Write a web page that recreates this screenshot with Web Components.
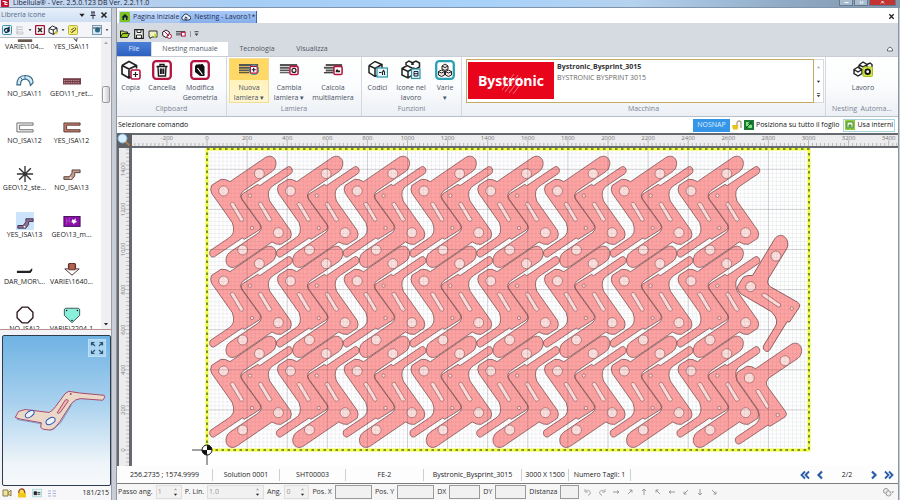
<!DOCTYPE html>
<html lang="it">
<head>
<meta charset="utf-8">
<title>Libellula</title>
<style>
html,body{height:100%;margin:0}
body{font:7px/10px "Open Sans","Noto Sans",sans-serif;color:#222;background:#fff;overflow:hidden}
</style>
</head>
<body>
<nest-app></nest-app>
<script>
const ICONS = {
  logo:['0 0 10 10','<rect width="10" height="10" rx="1" fill="#c8102e"/><path d="M2 3h3v4h3M5 3l3 2" stroke="#fff" fill="none" stroke-width="1.3"/>'],
  home:['0 0 10 10','<rect width="10" height="10" rx="1" fill="#7fc41c"/><path d="M1.5 5.200 5 2l3.500 3.200h-1V8h-5V5.200z" fill="#123"/><rect x="4.300" y="5.500" width="1.500" height="2.500" fill="#bde36a"/>'],
  cloud:['0 0 12 10','<path d="M3 8.500a2.300 2.300 0 0 1-.3-4.500A3.300 3.300 0 0 1 9 3.500a2.500 2.500 0 0 1 .3 5zM6 9.500V5M4 6.700 6 4.700l2 2" fill="#eef5ff" stroke="#1c2a44" stroke-width="1.100"/>'],
  open:['0 0 10 10','<path d="M0.500 8.500V2h3l1 1h3v1.500" fill="#cde04a" stroke="#1a1a1a"/><path d="M.5 8.500 2.500 4.500h7L7.500 8.500z" fill="#9acb22" stroke="#1a1a1a" stroke-width=".9"/>'],
  save:['0 0 10 10','<path d="M.7.7h8.600v8.600H.7z" fill="#fff" stroke="#222" stroke-width="1.200"/><path d="M3 1v2.500h4V1M2.500 9V6h5v3" fill="none" stroke="#222"/>'],
  refresh:['0 0 10 10','<path d="M1 2h8v6H4L2 9.500V8H1z" fill="#eef3c0" stroke="#222" stroke-width=".9"/><path d="M6.500 4.500 9.500 6 6 9.500z" fill="#c4d63a"/>'],
  cubeplus:['0 0 10 10','<path d="M.7 3 4 1l3.300 2v3.500L4 8.500.7 6.500z" fill="#fff" stroke="#222"/><circle cx="7.300" cy="7.200" r="2.200" fill="#fff" stroke="#b4133f"/><path d="M2 2l5 5" stroke="#b4133f"/>'],
  sheetred:['0 0 12 10','<path d="M0 2h11M0 4h7M0 6h7" stroke="#444" stroke-width="1.100"/><rect x="6.500" y="3" width="4.500" height="4.500" fill="#fff" stroke="#b4133f" stroke-width="1.200"/>'],
  copy:['0 0 20 20','<path d="M1 5.500 8 1.500l7.500 4v3M1 5.500v8.500l7 4 2-1M1 5.500l7 3.500 7.500-3.500M8 9v9" fill="none" stroke="#222" stroke-width="1.700"/><rect x="10" y="10" width="9" height="9" rx="1.500" fill="#fff" stroke="#b4133f" stroke-width="1.600"/><path d="M14.500 12v5M12 14.500h5" stroke="#222" stroke-width="1.200"/>'],
  trash:['0 0 20 20','<rect x="1.200" y="1.200" width="17.600" height="17.600" rx="3" fill="#fff" stroke="#b4133f" stroke-width="2.300"/><path d="M4.500 6.500h11M8 6V4.500h4V6M6 7l.5 9h7L14 7M8.500 8.500V14M10 8.500V14M11.700 8.500V14" fill="none" stroke="#1a1a1a" stroke-width="1.400"/>'],
  modify:['0 0 20 20','<rect x="1.200" y="1.200" width="17.600" height="17.600" rx="3" fill="#fff" stroke="#b4133f" stroke-width="2.300"/><path d="M5 6l2-2 1 1 1-1.200 1.500 1.200V4h2l2 2.500V16h-4.500L5 12z" fill="#111"/><path d="M7.500 8 12.500 14.500" stroke="#fff" stroke-width="1.200"/>'],
  newsheet:['0 0 22 20','<path d="M0 4.500h21M0 7.500h12M0 10.500h12" stroke="#555" stroke-width="2"/><path d="M0 13h11" stroke="#222" stroke-width="1"/><circle cx="16.500" cy="9.700" r="5.200" fill="#ffeeb0" stroke="#3a9fae" stroke-width="1.200"/><rect x="12.500" y="6" width="7.500" height="7.500" rx="1" fill="#fff" stroke="#b4133f" stroke-width="1.300"/><path d="M16.200 7.500v4.500M14 9.700h4.500" stroke="#123" stroke-width="1.300"/>'],
  chgsheet:['0 0 22 20','<path d="M1 4.500h19M1 7.500h10M1 10.500h10" stroke="#555" stroke-width="2"/><path d="M1 13h10" stroke="#222" stroke-width="1"/><rect x="12" y="6" width="9" height="9" rx="1.500" fill="#fff" stroke="#b4133f" stroke-width="1.700"/><circle cx="16.500" cy="10.500" r="2.200" fill="none" stroke="#222" stroke-width="1.400"/>'],
  multi:['0 0 22 20','<path d="M3 4.500h18M1 7.500h11M3 10.500h9" stroke="#555" stroke-width="2.300"/><path d="M1 13h10" stroke="#222" stroke-width="1.300"/><rect x="12" y="6" width="9" height="9" rx="1.500" fill="#fff" stroke="#b4133f" stroke-width="1.700"/><path d="M14 12.500v-2L15.500 9l1.500 1.500h1.800v2z" fill="#222"/>'],
  codes:['0 0 20 20','<path d="M1 5.500 7 1.500l7 3v4M1 5.500v7l6 4 2-1M1 5.500l6 3 7-4M7 8.500v8" fill="none" stroke="#222" stroke-width="1.500"/><rect x="9" y="8" width="10.500" height="9" fill="#e8f8fb" stroke="#2894a8" stroke-width="1.200"/><path d="M11 12.500h2.500M14.500 15v-3l1-1.500 1 1.500v3" stroke="#222" stroke-width="1.100" fill="none"/>'],
  icons:['0 0 20 20','<path d="M1 8.500 6 5.500l6 3v6L7 18l-6-3zM1 8.500l6 3 5-3M7 11.500V18M5 5V3l3-2 3 1.500V5M12 5V2.500L15 1l3.500 2v4L15 9l-3-1" fill="none" stroke="#222" stroke-width="1.500"/><rect x="10.500" y="9" width="8.500" height="9.500" fill="#dff3f7" stroke="#2894a8" stroke-width="1.200"/><path d="M13 11.500h4v4.500h-4zM13 13.700h4" fill="none" stroke="#223"/>'],
  misc:['0 0 20 20','<rect x="1.200" y="1.200" width="17.600" height="17.600" rx="3" fill="#fff" stroke="#2aa0b4" stroke-width="2.300"/><path d="M7 6l3-2 3 2v3l-3 1.500L7 9zM3.500 11.500 6.500 10l3 1.500V15l-3 1.500-3-1.500zM10.500 11.500l3-1.500 3 1.500V15l-3 1.500-3-1.500zM7 6l3 1.500L13 6M3.500 11.500l3 1.500 3-1.500 1 0 3 1.500 3-1.500" fill="#f3dede" stroke="#222" stroke-width="1"/>'],
  job:['0 0 20 20','<path d="M6 5l4-3 4 2.500V8M6 5v3l2.500 1.500M1 9.500l4-2.500 4 2.500v4L5 16l-4-2.500zM14 4.500l3-1.500 2 1.500V7M1 9.500 5 12l4-2.500M6 5l4 2 4-2" fill="none" stroke="#222" stroke-width="1.400"/><rect x="10" y="7" width="9.500" height="9.500" rx="1" fill="#d5e64b" stroke="#a3bf1e"/><circle cx="14.700" cy="11.700" r="2.300" fill="#fff" stroke="#111" stroke-width="1.800"/>'],
  lock:['0 0 10 10','<path d="M5 5V3a2 2 0 0 1 4 0v5" fill="none" stroke="#a98" stroke-width="1.300"/><path d="M0 5h6.500l-1 4.500H1z" fill="#e8c216"/>'],
  full:['0 0 10 10','<rect width="10" height="10" fill="#1c7a35"/><path d="M2 2h3l-1 2 4 1v3H5L2 6z" fill="#7fe07c"/><path d="M2 8l6-6" stroke="#052"/>'],
  inner:['0 0 10 10','<rect width="10" height="10" fill="#8fcb38"/><path d="M2 8V2h6v6H6V5H4v3z" fill="#f0f8c8" stroke="#274" stroke-width=".8"/>'],
  lib1:['0 0 10 10','<rect x=".5" y=".5" width="9" height="9" rx="1" fill="#dff1f8" stroke="#3d93b2"/><path d="M2.500 6.500C2 4 4 3 5.500 3.500L7 2.500v3L5 5M7.500 5C7 7 5 7.500 3 7" stroke="#123" fill="none" stroke-width="1.300"/>'],
  lib2:['0 0 10 10','<path d="M2 2h6M2 4.500h6M2 7h6v2H2zM2 1v8" stroke="#c3c3c8" fill="none"/>'],
  lib3:['0 0 10 10','<rect x=".6" y=".6" width="8.800" height="8.800" rx="1" fill="#fff" stroke="#a1112f" stroke-width="1.300"/><path d="M3 3l4 4M7 3 3 7" stroke="#222" stroke-width="1.500"/>'],
  lib4:['0 0 10 10','<path d="M1 3.500 4.500 1l4.500 2v4L5.500 9.500 1 7.500zM1 3.500 5 5l4-2M5.300 5v4" fill="#fff" stroke="#222"/><circle cx="8" cy="7.500" r="1.500" fill="#c9c33b"/>'],
  lib5:['0 0 10 10','<rect x=".5" y=".5" width="9" height="9" rx="1" fill="#f3f07a" stroke="#b9b63a"/><path d="M3 5l3-2M4 7l3-2M2.500 6.500a1.500 1.500 0 1 0 2-2M6 5.500a1.500 1.500 0 1 0 .5-3" stroke="#775a28" fill="none"/>'],
  lib6:['0 0 10 10','<rect x=".5" y=".5" width="9" height="9" fill="#d8e8f3" stroke="#7899b4"/><circle cx="5.500" cy="5" r="2.500" fill="#2b6a86"/><path d="M1 3h8" stroke="#444"/>'],
  b1:['0 0 10 10','<path d="M1 2h5v6H1zM6 5l3-3v6L6 6" fill="#efe3a0" stroke="#8b7b45"/>'],
  b2:['0 0 10 10','<path d="M1 5h8v4.500H1z" fill="#f0c81c"/><path d="M2 5C1 1 5 0 7 2l1 3" fill="#f7dd50" stroke="#8c3b16" stroke-width="1.200"/>'],
  b3:['0 0 12 10','<rect x=".5" y=".5" width="11" height="9" fill="#e6f5f4" stroke="#a9d8da"/><path d="M2.500 3.500h3v3.500h-3zM6.500 4.500h3.500M6.500 6.500h3.500" fill="#222" stroke="#222"/>'],
  b4:['0 0 10 10','<path d="M1 3h3M5.500 3H9M1 5.500h3M5.500 5.500H9M1 8h3M5.500 8H9" stroke="#a9b5d8" stroke-width="1.200"/>'],
  expand:['0 0 18 18','<rect width="18" height="18" fill="#a8d6f3" stroke="#c9e8fa"/><path d="M7 7 4 4M11 7l3-3M7 11l-3 3M11 11l3 3M3.500 6.500v-3h3M11.500 3.500h3v3M3.500 11.500v3h3M11.500 14.500h3v-3" stroke="#33536e" fill="none" stroke-width="1.200"/>'],
  zoom:['0 0 14 14','<rect width="14" height="14" fill="#5c5f66"/><path d="M8 8l4.500 4.500" stroke="#b5793e" stroke-width="2"/><circle cx="5.500" cy="5.500" r="4.500" fill="#d8eefc" stroke="#7fb4dc"/>'],
  pin:['0 0 8 8','<path d="M2 1h4M3 1v3M5 1v3M1.500 4.500h5M4 4.500V8" stroke="#334" fill="none"/>'],
  x:['0 0 8 8','<path d="M1.500 1.500l5 5M6.500 1.500l-5 5" stroke="#222" stroke-width="1.500"/>'],
  down:['0 0 6 6','<path d="M1 2h4L3 4.500z" fill="#222"/>'],
  up:['0 0 6 6','<path d="M1 4h4L3 1.500z" fill="#aaa"/>'],
  more:['0 0 6 6','<path d="M1 .7h4" stroke="#444"/><path d="M1 2.500h4L3 5z" fill="#444"/>'],
  pent:['0 0 8 8','<path d="M1.500 4 4 2l2.500 2v2h-5z" fill="#fff" stroke="#667"/>'],
  wmin:['0 0 8 5','<path d="M1 2.500h6" stroke="#fff" stroke-width="1.500"/>'],
  wmax:['0 0 8 5','<path d="M2 0v3.500h4V0" stroke="#fff" fill="none" stroke-width="1.200"/>'],
  wclose:['0 0 8 5','<path d="M1.500 4 4 1.500 6.500 4M4 1.500 2.500 0M4 1.500 5.500 0" stroke="#fff" fill="none" stroke-width="1.500"/>'],
  first:['0 0 10 10','<path d="M5 1.500 1.500 5 5 8.500M9 1.500 5.500 5 9 8.500" stroke="#2b5ca8" fill="none" stroke-width="1.800"/>'],
  prev:['0 0 10 10','<path d="M7 1.500 3.500 5 7 8.500" stroke="#2b5ca8" fill="none" stroke-width="2.200"/>'],
  next:['0 0 10 10','<path d="M3 1.500 6.500 5 3 8.500" stroke="#2b5ca8" fill="none" stroke-width="2.200"/>'],
  last:['0 0 10 10','<path d="M1 1.500 4.500 5 1 8.500M5 1.500 8.500 5 5 8.500" stroke="#2b5ca8" fill="none" stroke-width="1.800"/>'],
  undo:['0 0 8 8','<path d="M1 1v3h3M1.500 3.500C4 1 7.500 3 6 6L4 7.500" stroke="#aaa" fill="none"/>'],
  redo:['0 0 8 8','<path d="M7 1v3H4M6.500 3.500C4 1 .5 3 2 6l2 1.500" stroke="#aaa" fill="none"/>'],
  clip:['0 0 12 10','<circle cx="4" cy="4" r="2.500" fill="#eee" stroke="#999"/><circle cx="6.500" cy="6.500" r="2.500" fill="#eee" stroke="#999"/><path d="M9.500 4.500h2.500l-1.200 1.500z" fill="#777"/>'],
  i_plate:['0 0 20 20','<path d="M2 17h16v3H2z" fill="#6b5a52"/>'],
  i_hook:['0 0 20 20','<path d="M12 16l3 3 1-5" stroke="#555" fill="none" stroke-width="1.200"/>'],
  i_arc:['0 0 20 20','<path d="M1 15.500C1 8 4.500 5 10 5s9 3 9 8l-3 3C15.500 11.500 13 9 10 9s-5 2-5 6.500z" fill="#d5ecf8" stroke="#376a88" stroke-width="1.300"/><path d="M10 5v4M5 7l2.500 3" stroke="#376a88"/>'],
  i_grid:['0 0 20 20','<path d="M0 8h20v7H0z" fill="#743c48"/><path d="M1 10.500h18M1 13h18" stroke="#d9b4b4" stroke-dasharray="1 1"/>'],
  i_cw:['0 0 20 20','<path d="M19 5.500H1v10h18v-2.500H4V8h15z" fill="#f1f1f1" stroke="#666"/>'],
  i_cr:['0 0 20 20','<path d="M19 5.500H1v10h18v-2.500H4V8h15z" fill="#c77b6b" stroke="#4e3a36"/>'],
  i_star:['0 0 20 20','<path d="M10 1v18M1 10h18M3.500 3.500l13 13M16.500 3.500l-13 13" stroke="#333" stroke-width="1.500"/><circle cx="10" cy="10" r="2" fill="#333"/>'],
  i_z:['0 0 20 20','<path d="M1 16v-3h6l3-4V5.500h9V8.500h-6V12l-3 4z" fill="#c69a88" stroke="#4a3a38"/><circle cx="8.500" cy="14.500" r="1" fill="#fff"/>'],
  i_zs:['0 0 20 20','<rect width="20" height="20" fill="#cbe4fb"/><path d="M2 18v-3h6l3-4V7.500h8V10.500h-5V14l-3 4z" fill="#8f7190" stroke="#3a2d4c"/><circle cx="9.500" cy="16.500" r="1" fill="#fff"/>'],
  i_m:['0 0 20 20','<rect x="1" y="5" width="18" height="11" fill="#8a10a8" stroke="#3f0a55"/><path d="M10 8l2 1 2-2v3l2 1-3 1-1 2-1-2-2-1 1-1z" fill="#fff"/><path d="M4 7v7M7 6v6M4 10h4" stroke="#c860d8" stroke-width=".6"/>'],
  i_bar:['0 0 20 20','<path d="M1 13h14l3-3v3l-2 2.500H1z" fill="#222"/>'],
  i_arrow:['0 0 20 20','<path d="M6 6h8v5h4l-8 7-8-7h4z" fill="#fff" stroke="#3a2420"/><path d="M6.500 5h7v7h-7z" fill="#b46250" stroke="#5b2a22"/>'],
  i_o:['0 0 20 20','<path d="M7 1.200h6L18.800 7v6L13 18.800H7L1.200 13V7z" fill="#fff" stroke="#2d1720" stroke-width="1.500" stroke-linejoin="round"/>'],
  i_sh:['0 0 20 20','<path d="M1.500 3.500 3 2.500h14l1.500 1v7L10 18.500 1.500 10.500z" fill="#8af0dc" stroke="#35494a"/><circle cx="4" cy="5" r=".8"/><circle cx="16" cy="5" r=".8"/><circle cx="10" cy="16" r=".8"/>']
};
const ARROWS={ne:'M2 6 6 2M3.500 2H6v2.500',n:'M4 7V1M2 3l2-2 2 2',nw:'M6 6 2 2M2 4.500V2h2.500',w:'M7 4H1M3 2.500 1 4l2 1.500',sw:'M6 2 2 6M2 3.500V6h2.500',s:'M4 1v6M2 5l2 2 2-2',se:'M2 2l4 4M6 3.500V6H3.500',e:'M1 4h6M5 2.500 7 4 5 5.500'};
for(const k in ARROWS) ICONS['ar_'+k]=['0 0 8 8',`<path d="${ARROWS[k]}" stroke="#999" fill="none"/>`];

/* Builds an element class from a template string. */
function define(name, css, html, setup){
  const t=document.createElement('template');
  t.innerHTML=`<style>*{box-sizing:border-box}button{font:inherit;color:inherit;background:none;border:0;padding:0;margin:0}${css}</style>${html}`;
  customElements.define(name, class extends HTMLElement{
    constructor(){super();this.attachShadow({mode:'open'}).append(t.content.cloneNode(true));}
    connectedCallback(){ if(!this.ready){this.ready=true; if(setup) setup(this,this.shadowRoot);} }
  });
}
function fillIcon(el,r){const n=document.createElement('ui-icon');n.setAttribute('name',el.getAttribute('icon'));r.querySelector('.i').append(n);}

define('ui-icon',':host{display:block;flex:none;width:var(--s,10px);height:var(--s,10px)}svg{display:block;width:100%;height:100%}','',(el,r)=>{
  const[v,b]=ICONS[el.getAttribute('name')];
  r.innerHTML+=`<svg viewBox="${v}" aria-hidden="true">${b}</svg>`;
});

define('title-bar',`
:host{display:flex;height:8px;align-items:flex-end;overflow:hidden;background:linear-gradient(90deg,#c9dcf2 0,#b4cfee 17%,#a5cdf6 28%,#a9d2fa 55%,#b5d2ee 70%,#8fa9c4 88%,#8496aa 100%);color:#223;border-bottom:1px solid #7f93ab}
.t{display:flex;gap:4px;padding:0 0 0 1px;align-items:center;line-height:8px;--s:8px}
.w{display:flex;margin-left:auto;padding-right:4px;gap:1px;height:6px;align-self:flex-start}
.w button{display:flex;justify-content:center;width:14px;height:6px;background:#a9bccf;border:solid #667a90;border-width:0 1px 1px;--s:5px}
.w .c{width:27px;background:#c23431}`,
`<div class="t"><ui-icon name="logo"></ui-icon><span>Libellula® - Ver. 2.5.0.123 DB Ver. 2.2.11.0</span></div>
<div class="w"><button aria-label="Riduci"><ui-icon name="wmin"></ui-icon></button><button aria-label="Ingrandisci"><ui-icon name="wmax"></ui-icon></button><button class="c" aria-label="Chiudi"><ui-icon name="wclose"></ui-icon></button></div>`);

define('lib-item',':host{display:flex;flex-direction:column;align-items:center;height:47px;padding-top:18px;--s:18px;white-space:nowrap;min-width:0}span{line-height:10px}',
`<div class="i"></div><span><slot></slot></span>`,fillIcon);

define('lib-panel',`
:host{display:flex;flex-direction:column;min-height:0;background:#f2f3f6;border-right:1px solid #9aa0aa}
.h{display:flex;align-items:center;height:14px;padding:0 3px 0 1px;background:linear-gradient(#e6effa,#cfdff1);color:#566a88;gap:3px;--s:8px}
.h span{margin-right:auto}
.tb{display:flex;align-items:center;height:16px;gap:3px;padding:0 2px;background:#f4f5f8;border-bottom:1px solid #b8bcc4;--s:10px}
.tb .d{--s:4px}.tb .push{margin-left:auto}
.body{flex:1;display:flex;min-height:0;background:#fff;border-bottom:1px solid #b98f8f}
.list{flex:1;overflow:hidden;display:grid;grid-template-columns:47px 47px;grid-auto-rows:47px;padding:0 1px;min-width:0}
.sb{width:10px;background:#f0f0f2;display:flex;flex-direction:column;align-items:center;justify-content:space-between;--s:6px;padding:2px 0}
.th{width:8px;height:17px;border:1px solid #9a9a9a;border-radius:2px;background:linear-gradient(90deg,#fff,#ccc);margin:40px 0 auto}
.pv{flex:none;height:151px;margin:5px 0 0 2px;border:1px solid #2c3c4c;border-radius:2px;background:linear-gradient(#6fb3e3,#a9d1ee 45%,#eef4f9 85%,#f7f9fb);position:relative}
.pv svg{display:block;width:100%;height:100%}
.pv button{position:absolute;top:3px;right:4px;--s:18px}
.ft{display:flex;align-items:center;height:14px;gap:5px;padding:0 2px;background:#f7f7f9}
.ft b{font-weight:400;margin-left:auto}`,
`<div class="h"><span>Libreria icone</span><ui-icon name="down"></ui-icon><ui-icon name="pin"></ui-icon><ui-icon name="x"></ui-icon></div>
<div class="tb"><button aria-label="Aggiorna"><ui-icon name="lib1"></ui-icon></button><button aria-label="Elenco"><ui-icon name="lib2"></ui-icon></button><ui-icon class="d" name="down"></ui-icon><button aria-label="Elimina"><ui-icon name="lib3"></ui-icon></button><button aria-label="Pezzo"><ui-icon name="lib4"></ui-icon></button><ui-icon class="d" name="down"></ui-icon><button aria-label="Collega"><ui-icon name="lib5"></ui-icon></button><button class="push" aria-label="Vista"><ui-icon name="lib6"></ui-icon></button><ui-icon class="d" name="down"></ui-icon></div>
<div class="body"><div class="list">
<lib-item icon="i_plate">VARIE\\104...</lib-item><lib-item icon="i_hook">YES_ISA\\11</lib-item>
<lib-item icon="i_arc">NO_ISA\\11</lib-item><lib-item icon="i_grid">GEO\\11_ret...</lib-item>
<lib-item icon="i_cw">NO_ISA\\12</lib-item><lib-item icon="i_cr">YES_ISA\\12</lib-item>
<lib-item icon="i_star">GEO\\12_ste...</lib-item><lib-item icon="i_z">NO_ISA\\13</lib-item>
<lib-item icon="i_zs">YES_ISA\\13</lib-item><lib-item icon="i_m">GEO\\13_m...</lib-item>
<lib-item icon="i_bar">DAR_MOR\\...</lib-item><lib-item icon="i_arrow">VARIE\\1640...</lib-item>
<lib-item icon="i_o">NO_ISA\\2</lib-item><lib-item icon="i_sh">VARIE\\2204-1</lib-item></div>
<div class="sb"><ui-icon name="up"></ui-icon><div class="th"></div><ui-icon name="down"></ui-icon></div></div>
<div class="pv"><svg viewBox="8 16 324 450"><g stroke="#a8486c" stroke-width="3" fill="#ead9c8" stroke-linejoin="round"><path d="M45 262 55 244 75 238 148 247 Q160 240 168 228L196 190 207 183 240 188 314 195 316 201 310 210 243 205Q228 205 215 220L180 275 163 296 150 300 130 298 122 292 124 278 60 267z"/><path d="M172 248 196 210Q204 204 206 212L182 246Q176 252 172 248z" fill="#f2b8b4"/></g><g fill="#eaf4fb" stroke="#3a53b4" stroke-width="3"><ellipse cx="89" cy="252" rx="15" ry="8" transform="rotate(-35 89 252)"/><ellipse cx="152" cy="273" rx="15" ry="9" transform="rotate(-30 152 273)"/></g><path d="M50 268 124 281M152 302 182 279 216 223" stroke="#6d72a8" stroke-width="2" fill="none"/><circle cx="213" cy="191" r="3" fill="#a8486c"/></svg><button aria-label="Espandi"><ui-icon name="expand"></ui-icon></button></div>
<div class="ft"><ui-icon name="b1"></ui-icon><ui-icon name="b2"></ui-icon><ui-icon name="b3"></ui-icon><ui-icon name="b4"></ui-icon><b>181/215</b></div>`,
(el,r)=>{r.querySelector('.list').scrollTop=32;});

define('doc-tabs',`
:host{display:flex;height:15px;align-items:flex-end;background:#fff;padding:0 3px 0 2px;--s:10px}
a{display:flex;align-items:center;gap:3px;height:12px;padding:0 1px;color:#1c2f55;text-decoration:none;background:linear-gradient(#c5dafa,#a9c6f2)}
a+a{background:linear-gradient(#a9c8f8,#86aeea);border-right:1px solid #3f62a8}
button{margin:0 0 3px auto;--s:7px}`,
`<a href="#home"><ui-icon name="home"></ui-icon>Pagina Iniziale</a><a href="#job"><ui-icon name="cloud"></ui-icon>Nesting - Lavoro1*</a><button aria-label="Chiudi scheda"><ui-icon name="x"></ui-icon></button>`);

define('ribbon-button',`
:host{display:flex;width:var(--w,40px)}
button{flex:1;display:flex;flex-direction:column;align-items:center;text-align:center;padding-top:2px;color:#4a5263;--s:20px;min-width:0;white-space:pre-line}
:host([hot]) button{background:linear-gradient(#ffd862 0,#ffd968 49%,#fff2bd 50%,#fff6cf);box-shadow:inset 0 0 0 1px #f0dc94}
span{margin-top:3px;line-height:10px}`,
`<button><div class="i"></div><span><slot></slot></span></button>`,fillIcon);

define('ribbon-group',`
:host{display:flex;flex-direction:column;border-right:1px solid #d3d8e1}
.r{display:flex;flex:1;min-height:0;padding:1px var(--pr,0) 0 var(--pl,0)}
.l{height:12px;line-height:12px;text-align:center;color:#7c8494;white-space:pre}`,
`<div class="r"><slot></slot></div><div class="l"></div>`,(el,r)=>{r.querySelector('.l').textContent=el.getAttribute('label')});

define('machine-gallery',`
:host{flex:1;display:flex;padding-top:1px}
.m{flex:1;display:flex;gap:3px;border:1px solid #c8ab62;background:#fff;padding:1px}
.logo{width:86px;margin:1px 0 2px;background:#e8051c;display:flex;align-items:center;justify-content:center;position:relative}
.logo b{font:700 14px/16px "Open Sans",sans-serif;color:#fff}
.logo svg{position:absolute;left:32px;top:8px;width:26px;height:26px}
.t b,.t span{display:block;line-height:11px}.t b{color:#333}.t span{color:#666}
.s{width:10px;border:1px solid #d5d9e0;border-left:0;background:#fff;display:flex;flex-direction:column;align-items:center;justify-content:space-around;--s:5px}`,
`<div class="m"><div class="logo"><b>Bystronic</b><svg viewBox="0 0 26 26"><path d="M2 20 14 4M5 22 18 5M9 23 21 7M13 24l10-13" stroke="#fff" stroke-opacity=".55" stroke-width=".8"/></svg></div><div class="t"><b>Bystronic_Bysprint_3015</b><span>BYSTRONIC BYSPRINT 3015</span></div></div>
<div class="s"><button aria-label="Su"><ui-icon name="up"></ui-icon></button><button aria-label="Giù"><ui-icon name="down"></ui-icon></button><button aria-label="Altro"><ui-icon name="more"></ui-icon></button></div>`);

define('app-ribbon',`
:host{display:block}
.top{background:#d6dae1;display:flex;flex-direction:column;height:33px;justify-content:flex-end}
.q{display:flex;align-items:center;gap:4px;padding:0 3px;height:14px;margin-bottom:1px;--s:10px}
.q .d{--s:6px;border-left:1px solid #999;padding-left:2px;width:10px}
.tabs{display:flex;height:14px;line-height:14px;align-items:stretch;color:#4f5766}
.tabs button{padding:0;text-align:center}
.f{width:34px;background:linear-gradient(#4a7fd8,#2c60c0);color:#dfe9ff}
.a{width:76px;background:#fff;margin-left:1px}
.x{width:58px}.y{width:52px}
.tabs .e{margin-left:auto;padding-right:4px;--s:8px}
.g{display:flex;height:61px;background:linear-gradient(#fff,#fbfcfd 50%,#eceff4);border-bottom:1px solid #b9bfc9;border-top:1px solid #c8cdd6}
ribbon-group{padding-bottom:1px}
ribbon-group:last-child{flex:none;width:72px;border-right:0;--pl:17px}
.mid{flex:1;--pl:4px;--pr:1px}`,
`<div class="top"><div class="q"><ui-icon name="open"></ui-icon><ui-icon name="save"></ui-icon><ui-icon name="refresh"></ui-icon><ui-icon name="cubeplus"></ui-icon><ui-icon name="sheetred"></ui-icon><ui-icon class="d" name="more"></ui-icon></div>
<div class="tabs"><button class="f">File</button><button class="a">Nesting manuale</button><button class="x">Tecnologia</button><button class="y">Visualizza</button><button class="e" aria-label="Riduci barra"><ui-icon name="pent"></ui-icon></button></div></div>
<div class="g">
<ribbon-group label="Clipboard" style="--pr:6px"><ribbon-button icon="copy" style="--w:27px">Copia</ribbon-button><ribbon-button icon="trash" style="--w:36px">Cancella</ribbon-button><ribbon-button icon="modify">Modifica
Geometria</ribbon-button></ribbon-group>
<ribbon-group label="Lamiera" style="--pl:2px;--pr:4px"><ribbon-button hot icon="newsheet">Nuova
lamiera ▾</ribbon-button><ribbon-button icon="chgsheet">Cambia
lamiera ▾</ribbon-button><ribbon-button icon="multi" style="--w:48px">Calcola
multilamiera</ribbon-button></ribbon-group>
<ribbon-group label="Funzioni"><ribbon-button icon="codes" style="--w:31px">Codici</ribbon-button><ribbon-button icon="icons" style="--w:36px">Icone nel
lavoro</ribbon-button><ribbon-button icon="misc" style="--w:32px">Varie
▾</ribbon-button></ribbon-group>
<ribbon-group class="mid" label="Macchina"><machine-gallery></machine-gallery></ribbon-group>
<ribbon-group label="Nesting  Automa..."><ribbon-button icon="job">Lavoro</ribbon-button></ribbon-group></div>`);

define('command-row',`
:host{display:flex;align-items:center;height:16px;padding:0 3px 0 1px;background:#fff;gap:2px;color:#111;--s:10px}
span{margin-right:auto}
button{display:flex;align-items:center;gap:2px;height:13px}
.n{background:#3596e8;color:#dff0ff;padding:0 3px;width:37px;justify-content:center}
.u{margin-left:2px;border:1px solid #a9d3da;padding:0 1px}`,
`<span>Selezionare comando</span><button class="n">NOSNAP</button><button aria-label="Blocco"><ui-icon name="lock"></ui-icon></button><button><ui-icon name="full"></ui-icon>Posiziona su tutto il foglio</button><button class="u"><ui-icon name="inner"></ui-icon>Usa interni</button>`);

define('nest-canvas',`
:host{display:grid;grid-template:15px 1fr / 15px 1fr;min-height:0;background:#fff}
svg{display:block;width:100%;height:100%;overflow:hidden}
.c{background:#5c5f66;--s:14px}
.h,.v{background:#ececee;overflow:hidden;min-height:0;min-width:0}
.h{border-top:2px solid #66696f;border-bottom:2px solid #66696f}
.v{border-left:2px solid #66696f;border-right:3px solid #66696f}
.m{overflow:hidden;min-height:0;min-width:0}
text{font:6px "Open Sans",sans-serif;fill:#777;text-anchor:middle}`,
`<div class="c"><ui-icon name="zoom"></ui-icon></div><div class="h"><svg></svg></div><div class="v"><svg></svg></div><div class="m"><svg></svg></div>`,
(el,r)=>{
  const S=40.1, X=75, Y=302, [h,v,m]=r.querySelectorAll('div svg');
  let a='',d='';
  for(let k=-1;k<=17;k++){const x=X+k*S; a+=`<text x="${x}" y="5">${k*200}</text>`;}
  for(let k=-2;k<=30;k++){const x=X+k*S; for(let j=0;j<10;j++)d+=`M${x+j*S/10} 11v${j?-3:-6}`;}
  h.innerHTML=`<path d="${d}" stroke="#999" stroke-width=".6"/>`+a;
  a='';d='';
  for(let k=-1;k<=7;k++){const y=Y-k*S; if(k>=0)a+=`<text transform="translate(6 ${y}) rotate(-90)">${k*200}</text>`; for(let j=0;j<10;j++)d+=`M10 ${y-j*S/10}h${j?-3:-5}`;}
  v.innerHTML=`<path d="${d}" stroke="#999" stroke-width=".6"/>`+a;
  const W=602,H=301,T=Y-H;
  let mi='',ma='';
  for(let i=0;i<=150;i++){const s=`M${X+i*S/10} ${T}v${H}`; i%10?mi+=s:ma+=s;}
  for(let i=0;i<=75;i++){const s=`M${X} ${Y-i*S/10}h${W}`; i%10?mi+=s:ma+=s;}
  let p='';
  for(let j=0;j<3;j++)for(let i=0;i<8;i++){p+=`<g transform="translate(${i*200.3} ${j*270})"><use href="#p"/><use href="#p" transform="rotate(180 408 245.500)"/></g>`;}
  p+='<use href="#p" transform="translate(1577 561)"/><use href="#p" transform="translate(1907 470) rotate(-24.500) translate(-326 -183)"/>';
  m.innerHTML=`<defs><g id="p"><path d="M345 155 446 86C468 68 488 86 482 108Q480 118 472 124L386 182Q372 194 380 208L435 284Q441 293 433 300L388 328 382 324 300 379C288 388 278 368 288 360L340 325Q364 312 352 278L290 190Q284 178 290 166L318 148Q332 146 345 155z" fill="#ffa3a2" stroke="#6a3a3a" stroke-width="2" stroke-linejoin="round"/><g fill="#fde0dd" stroke="#a05c5c" stroke-width="2"><circle cx="433" cy="131" r="15"/><circle cx="326" cy="183" r="15"/><circle cx="411" cy="294" r="5"/><path d="M345 222Q352 212 359 222L386 268Q384 278 376 273z"/></g></g></defs>
  <rect x="${X}" y="${T}" width="${W}" height="${H}" fill="#fff"/>
  <g transform="translate(-17 -18) scale(.33333)">${p}</g>
  <path d="${mi}" stroke="#4a5070" stroke-opacity=".14" stroke-width=".5"/><path d="${ma}" stroke="#334" stroke-opacity=".32" stroke-width=".7"/>
  <rect x="${X}" y="${T}" width="${W}" height="${H}" fill="none" stroke="#f4fa3c" stroke-width="3"/>
  <rect x="${X}" y="${T}" width="${W}" height="${H}" fill="none" stroke="#4a7320" stroke-width="1.500" stroke-dasharray="2.500 3.500"/>
  <path d="M${X-15} ${Y}h16M${X} ${Y-2}v17" stroke="#444" stroke-width="1"/><circle cx="${X}" cy="${Y}" r="5" fill="#fff" stroke="#111"/><path d="M${X} ${Y}v-5a5 5 0 0 1 5 5zM${X} ${Y}v5a5 5 0 0 1-5-5z" fill="#111"/>`;
});

define('status-row',`
:host{display:flex;align-items:center;height:18px;background:#fdfdfd;color:#222;border-bottom:1px solid #7a7d82;padding-right:4px}
span{width:var(--w);text-align:center;border-right:1px solid #d0d0d0;white-space:nowrap;line-height:12px}
nav{margin-left:auto;display:flex;align-items:center;gap:5px;--s:10px}nav b{font-weight:400;width:34px;text-align:center}`,
`<span style="--w:96px">256.2735 ; 1574.9999</span><span style="--w:67px">Solution 0001</span><span style="--w:66px">SHT00003</span><span style="--w:78px">FE-2</span><span style="--w:98px">Bystronic_Bysprint_3015</span><span style="--w:47px">3000 X 1500</span><span style="--w:62px">Numero Tagli: 1</span>
<nav><button aria-label="Primo"><ui-icon name="first"></ui-icon></button><button aria-label="Precedente"><ui-icon name="prev"></ui-icon></button><b>2/2</b><button aria-label="Successivo"><ui-icon name="next"></ui-icon></button><button aria-label="Ultimo"><ui-icon name="last"></ui-icon></button></nav>`);

define('num-field',`
:host{display:flex;align-items:center;gap:3px}
label{white-space:nowrap}
div{display:flex;width:var(--w);height:14px;border:1px solid #9a9a9a;background:#f1f1f1}
:host([spin]) div{border-color:#ddd}
input{flex:1;min-width:0;width:0;border:0;padding:0 1px;margin:0;background:none;font:inherit;color:#999}
i{display:none;width:8px;flex-direction:column;justify-content:center;--s:5px}
:host([spin]) i{display:flex}`,
`<label for="f"><slot></slot></label><div><input id="f"><i><ui-icon name="up"></ui-icon><ui-icon name="down"></ui-icon></i></div>`,
(el,r)=>{const i=r.querySelector('input');i.value=el.getAttribute('value')||'';i.setAttribute('aria-label',el.textContent)});

define('step-bar',`
:host{display:flex;align-items:center;height:16px;gap:3px;padding:0 4px 0 1px;background:#f6f6f7;color:#333}
nav{display:flex;gap:6px;padding-left:2px;--s:8px}.e{margin-left:auto;--s:12px}`,
`<num-field spin value="1" style="--w:26px">Passo ang.</num-field><num-field spin value="1.0" style="--w:57px">P. Lin.</num-field><num-field spin value="0" style="--w:25px">Ang.</num-field><num-field style="--w:37px">Pos. X</num-field><num-field style="--w:37px">Pos. Y</num-field><num-field style="--w:31px">DX</num-field><num-field style="--w:31px">DY</num-field><num-field style="--w:19px">Distanza</num-field>
<nav></nav><button class="e" aria-label="Opzioni"><ui-icon name="clip"></ui-icon></button>`,
(el,r)=>{r.querySelector('nav').innerHTML=['undo','redo','ar_e','ar_ne','ar_n','ar_nw','ar_w','ar_sw','ar_s','ar_se'].map(n=>`<button aria-label="${n}"><ui-icon name="${n}"></ui-icon></button>`).join('')});

define('nest-app',`
:host{display:grid;grid-template:auto 1fr / 112px 1fr;height:100vh;background:#c9ced6}
title-bar{grid-column:1/-1}
.main{display:flex;flex-direction:column;min-width:0;min-height:0;border-left:1px solid #8f959f;border-right:1px solid #8a94a3;margin:0 1px 0 4px}
nest-canvas{flex:1}`,
`<title-bar></title-bar><lib-panel></lib-panel><div class="main"><doc-tabs></doc-tabs><app-ribbon></app-ribbon><command-row></command-row><nest-canvas></nest-canvas><status-row></status-row><step-bar></step-bar></div>`);
</script>
</body>
</html>
